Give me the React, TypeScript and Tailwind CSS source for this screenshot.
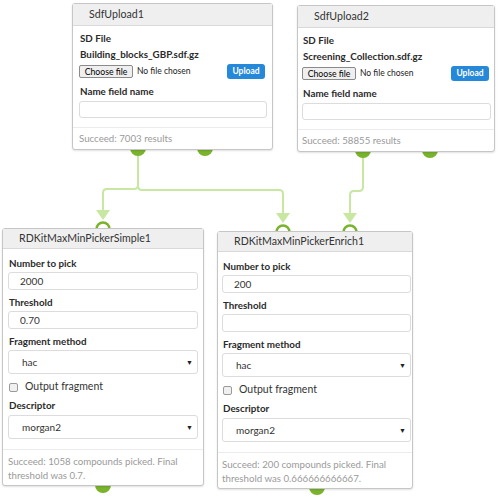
import React from "react";

const GREEN = "#7ab32c";
const LINE = "#c7e7a2";

function Header({ title, h }: { title: string; h: string }) {
  return (
    <div className={`${h} flex items-center border-b border-[#d9d9d9] bg-[#efefef] pl-[16px] text-[10.6px] text-[#333]`}>
      {title}
    </div>
  );
}

function Label({ children, className = "" }: { children: React.ReactNode; className?: string }) {
  return <div className={`h-[16px] leading-[16px] text-[9.8px] font-bold text-[#2b2b2b] pl-[1px] ${className}`}>{children}</div>;
}

function TextInput({ value, className = "" }: { value: string; className?: string }) {
  return (
    <div className={`h-[18px] rounded-[3px] border border-[#dcdcdc] bg-white pl-[11px] flex items-center text-[10px] text-[#333] ${className}`}>
      {value}
    </div>
  );
}

function Select({ value, className = "" }: { value: string; className?: string }) {
  return (
    <div className={`h-[24px] rounded-[3px] border border-[#dcdcdc] bg-white pl-[13px] pr-[4px] flex items-center justify-between text-[10px] text-[#333] ${className}`}>
      <span>{value}</span>
      <span className="text-[7px] text-[#222]">▼</span>
    </div>
  );
}

function UploadNode({ pos, title, file, footer, pad }: { pos: string; title: string; file: string; footer: string; pad: string }) {
  return (
    <div className={`absolute ${pos} z-10 rounded-[3px] border border-[#c6c6c6] bg-white shadow-[0_1px_2px_rgba(0,0,0,0.12)]`}>
      <Header title={title} h="h-[22px]" />
      <div className={`${pad} pt-[4px] pb-[9px] border-b border-[#ececec]`}>
        <Label>SD File</Label>
        <Label>{file}</Label>
        <div className="mt-[2px] h-[15px] flex items-center">
          <div className="h-[13px] w-[54px] rounded-[2px] border border-[#8a8a8a] bg-[#efefef] flex items-center justify-center text-[8.7px] text-black">
            Choose file
          </div>
          <span className="ml-[4px] text-[8.5px] text-[#222]">No file chosen</span>
          <div className="ml-auto mr-[2px] h-[15px] w-[38px] rounded-[3px] bg-[#2588d8] flex items-center justify-center text-[8.5px] font-bold text-white">
            Upload
          </div>
        </div>
        <Label className="mt-[4px]">Name field name</Label>
        <div className="mt-[2px] h-[17px] rounded-[3px] border border-[#dcdcdc]" />
      </div>
      <div className={`${pad} pt-[2px] pb-[3px] h-[21px] leading-[16px] text-[9.7px] text-[#9a9a9a]`}>{footer}</div>
    </div>
  );
}

function PickerNode({ pos, title, num, threshold, footer1, footer2, pad }: { pos: string; title: string; num: string; threshold: string; footer1: string; footer2: string; pad: string }) {
  return (
    <div className={`absolute ${pos} z-10 rounded-[3px] border border-[#c6c6c6] bg-white shadow-[0_1px_2px_rgba(0,0,0,0.12)]`}>
      <Header title={title} h="h-[20px]" />
      <div className={`${pad} pt-[6px] pb-[10px] border-b border-[#ececec]`}>
        <Label>Number to pick</Label>
        <TextInput value={num} className="mt-[1px]" />
        <Label className="mt-[4px]">Threshold</Label>
        <TextInput value={threshold} className="mt-[1px]" />
        <Label className="mt-[4px]">Fragment method</Label>
        <Select value="hac" className="mt-[1px]" />
        <div className="mt-[5px] h-[16px] flex items-center">
          <div className="ml-[1px] h-[9px] w-[9px] rounded-[2px] border border-[#9a9a9a] bg-[#f0f0f0]" />
          <span className="ml-[7px] text-[10.5px] text-[#333]">Output fragment</span>
        </div>
        <Label className="mt-[2px]">Descriptor</Label>
        <Select value="morgan2" className="mt-[2px]" />
      </div>
      <div className={`${pad} pt-[4px] pb-[3px] leading-[14px] text-[9.7px] text-[#9a9a9a]`}>
        <div>{footer1}</div>
        <div>{footer2}</div>
      </div>
    </div>
  );
}

export default function App() {
  return (
    <div className="relative w-[500px] h-[500px] overflow-hidden bg-white font-['Lato',sans-serif]">
      <svg className="absolute left-0 top-0 z-0" width="500" height="500" viewBox="0 0 500 500">
        <g fill="none" stroke={LINE} strokeWidth="2">
          <path d="M138 152 V185 Q138 189 134 189 H107 Q103 189 103 193 V212" />
          <path d="M138 152 V186 Q138 190 142 190 H279 Q283 190 283 194 V215" />
          <path d="M363 152 V187 Q363 191 359 191 H354 Q350 191 350 195 V215" />
        </g>
        <g fill={LINE}>
          <polygon points="96,210 110,210 103,220" />
          <polygon points="276,213 290,213 283,223" />
          <polygon points="343,213 357,213 350,223" />
        </g>
        <g fill={GREEN}>
          <circle cx="138" cy="148" r="8" />
          <circle cx="205" cy="148" r="8" />
          <circle cx="363" cy="150" r="8" />
          <circle cx="430" cy="150" r="8" />
          <circle cx="103" cy="485" r="8" />
          <circle cx="317" cy="487" r="8" />
        </g>
        <g fill="white" stroke={GREEN} strokeWidth="2.5">
          <circle cx="103" cy="229" r="6.5" />
          <circle cx="283" cy="232" r="6.5" />
          <circle cx="350" cy="232" r="6.5" />
        </g>
      </svg>

      <UploadNode pos="left-[72px] top-[3px] w-[201px]" pad="pl-[6px] pr-[5px]" title="SdfUpload1" file="Building_blocks_GBP.sdf.gz" footer="Succeed: 7003 results" />
      <UploadNode pos="left-[297px] top-[5px] w-[198px]" pad="pl-[4px] pr-[3px]" title="SdfUpload2" file="Screening_Collection.sdf.gz" footer="Succeed: 58855 results" />
      <PickerNode pos="left-[2px] top-[228px] w-[202px]" pad="pl-[5px] pr-[5px]" title="RDKitMaxMinPickerSimple1" num="2000" threshold="0.70" footer1="Succeed: 1058 compounds picked. Final" footer2="threshold was 0.7." />
      <PickerNode pos="left-[217px] top-[231px] w-[196px]" pad="pl-[4px] pr-[1px]" title="RDKitMaxMinPickerEnrich1" num="200" threshold="" footer1="Succeed: 200 compounds picked. Final" footer2="threshold was 0.666666666667." />
    </div>
  );
}
